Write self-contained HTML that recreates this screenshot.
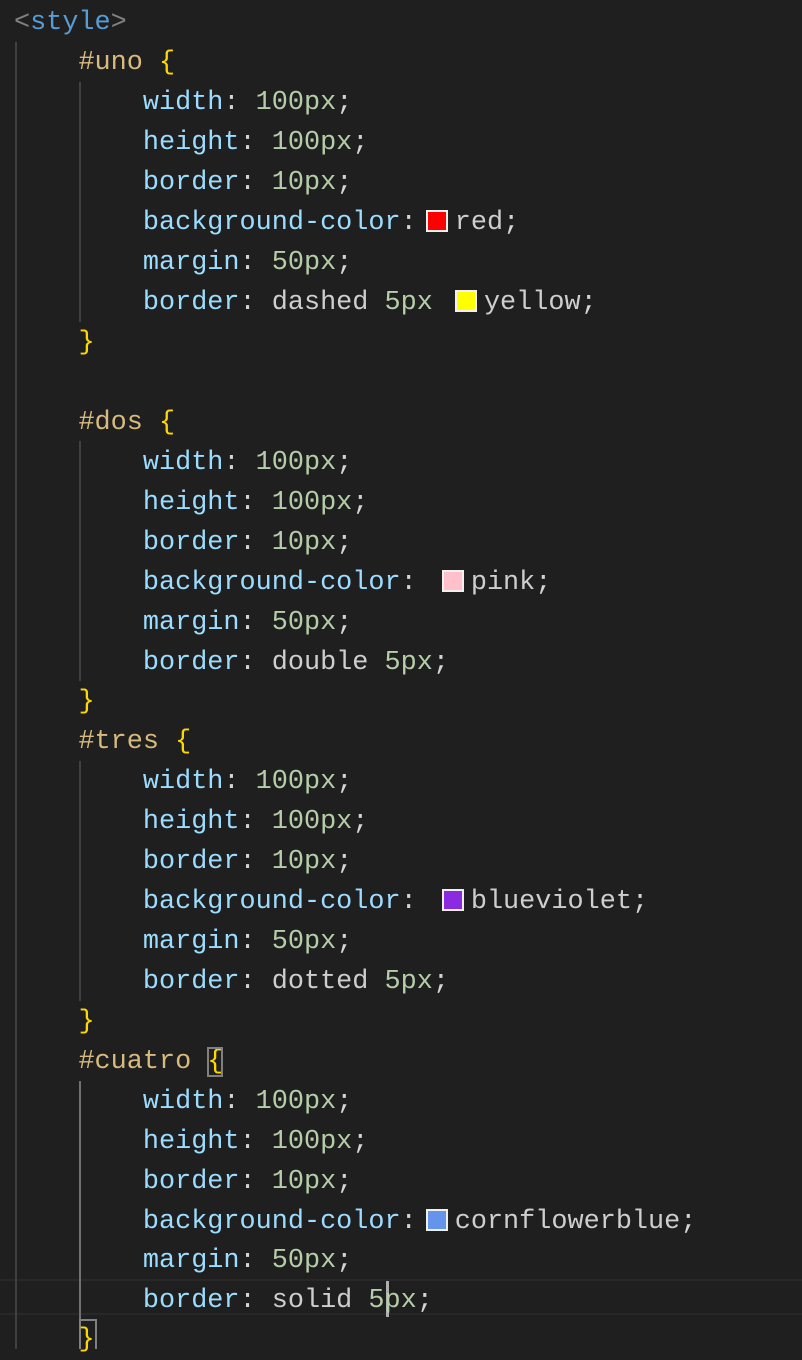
<!DOCTYPE html>
<html><head><meta charset="utf-8"><style>
html,body{margin:0;padding:0;background:#1f1f1f;width:802px;height:1349px;overflow:hidden}
.l{position:absolute;left:14px;height:40px;line-height:40px;font-family:"Liberation Mono",monospace;font-size:26.85px;white-space:pre;color:#d4d4d4;margin-top:2px}
.p{color:#9cdcfe}.n{color:#b5cea8}.s{color:#d7ba7d}.b{color:#ffd700}.t{color:#569cd6}.g{color:#808080}.v{color:#cecece}
.sw{display:inline-block;width:18px;height:18px;border:2px solid #f0f0f0;vertical-align:-3px;margin:0 7px 0 9px}
.gd{position:absolute;width:2px;background:#404040}
</style></head><body>
<div style="position:absolute;left:0;top:1279px;width:802px;height:36px;border-top:2px solid #282828;border-bottom:2px solid #282828;box-sizing:border-box"></div>
<div class="gd" style="left:15px;top:42px;height:1307px"></div>
<div class="gd" style="left:79px;top:82px;height:240px"></div>
<div class="gd" style="left:79px;top:441px;height:240px"></div>
<div class="gd" style="left:79px;top:761px;height:240px"></div>
<div class="gd" style="left:79px;top:1081px;height:240px;background:#707070"></div>
<div style="position:absolute;left:79px;top:1319px;width:18px;height:30px;border:2px solid #808080;border-bottom:none;box-sizing:border-box;background:#1f1f1f"></div>
<div style="position:absolute;left:386px;top:1281px;width:3px;height:36px;background:#aeafad"></div>

<div class="l" style="top:1px"><span class="g">&lt;</span><span class="t">style</span><span class="g">&gt;</span></div>
<div class="l" style="top:41px">    <span class="s">#uno</span> <span class="b">{</span></div>
<div class="l" style="top:81px">        <span class="p">width</span>: <span class="n">100px</span>;</div>
<div class="l" style="top:121px">        <span class="p">height</span>: <span class="n">100px</span>;</div>
<div class="l" style="top:161px">        <span class="p">border</span>: <span class="n">10px</span>;</div>
<div class="l" style="top:201px">        <span class="p">background-color</span>:<span class="sw" style="background:red"></span><span class="v">red</span>;</div>
<div class="l" style="top:241px">        <span class="p">margin</span>: <span class="n">50px</span>;</div>
<div class="l" style="top:281px">        <span class="p">border</span>: <span class="v">dashed</span> <span class="n">5px</span> <span class="sw" style="background:yellow;margin-left:6px;margin-right:7px"></span><span class="v">yellow</span>;</div>
<div class="l" style="top:321px">    <span class="b">}</span></div>

<div class="l" style="top:401px">    <span class="s">#dos</span> <span class="b">{</span></div>
<div class="l" style="top:441px">        <span class="p">width</span>: <span class="n">100px</span>;</div>
<div class="l" style="top:481px">        <span class="p">height</span>: <span class="n">100px</span>;</div>
<div class="l" style="top:521px">        <span class="p">border</span>: <span class="n">10px</span>;</div>
<div class="l" style="top:561px">        <span class="p">background-color</span>: <span class="sw" style="background:pink"></span><span class="v">pink</span>;</div>
<div class="l" style="top:601px">        <span class="p">margin</span>: <span class="n">50px</span>;</div>
<div class="l" style="top:641px">        <span class="p">border</span>: <span class="v">double</span> <span class="n">5px</span>;</div>
<div class="l" style="top:680px">    <span class="b">}</span></div>
<div class="l" style="top:720px">    <span class="s">#tres</span> <span class="b">{</span></div>
<div class="l" style="top:760px">        <span class="p">width</span>: <span class="n">100px</span>;</div>
<div class="l" style="top:800px">        <span class="p">height</span>: <span class="n">100px</span>;</div>
<div class="l" style="top:840px">        <span class="p">border</span>: <span class="n">10px</span>;</div>
<div class="l" style="top:880px">        <span class="p">background-color</span>: <span class="sw" style="background:blueviolet"></span><span class="v">blueviolet</span>;</div>
<div class="l" style="top:920px">        <span class="p">margin</span>: <span class="n">50px</span>;</div>
<div class="l" style="top:960px">        <span class="p">border</span>: <span class="v">dotted</span> <span class="n">5px</span>;</div>
<div class="l" style="top:1000px">    <span class="b">}</span></div>
<div class="l" style="top:1040px">    <span class="s">#cuatro</span> <span class="b" style="outline:2px solid #808080;outline-offset:-2px">{</span></div>
<div class="l" style="top:1080px">        <span class="p">width</span>: <span class="n">100px</span>;</div>
<div class="l" style="top:1120px">        <span class="p">height</span>: <span class="n">100px</span>;</div>
<div class="l" style="top:1160px">        <span class="p">border</span>: <span class="n">10px</span>;</div>
<div class="l" style="top:1200px">        <span class="p">background-color</span>:<span class="sw" style="background:cornflowerblue"></span><span class="v">cornflowerblue</span>;</div>
<div class="l" style="top:1239px">        <span class="p">margin</span>: <span class="n">50px</span>;</div>
<div class="l" style="top:1279px">        <span class="p">border</span>: <span class="v">solid</span> <span class="n">5px</span>;</div>
<div class="l" style="top:1318px">    <span class="b">}</span></div>
</body></html>
